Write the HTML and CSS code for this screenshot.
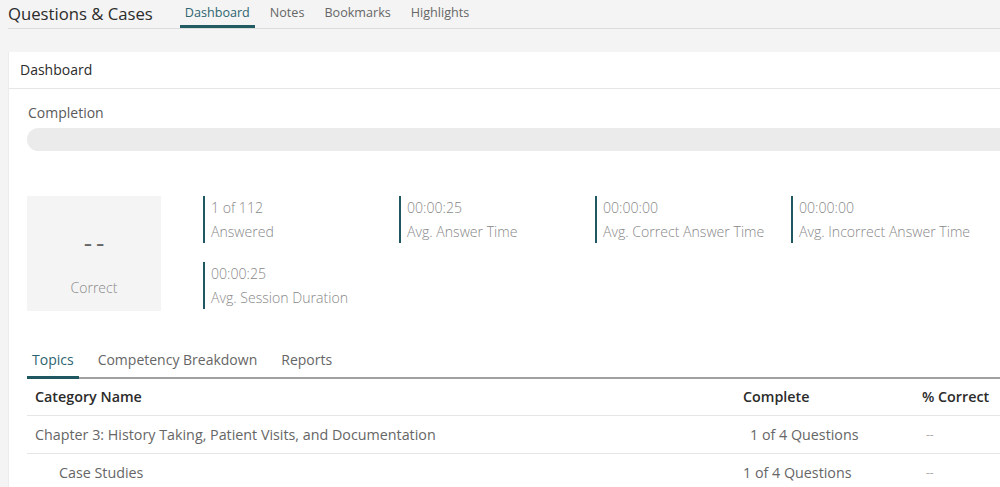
FILE: index.html
```html
<!DOCTYPE html>
<html lang="en">

<head>
    <meta charset="UTF-8">
    <meta name="viewport" content="width=device-width, initial-scale=1.0">
    <title>Questions &amp; Cases</title>
    <link rel="stylesheet" href="styles.css">
</head>

<body>
    <div class="wrapper">
        <header class="topbar">
            <h1 class="app-title">Questions &amp; Cases</h1>
            <nav class="main-nav">
                <a href="#" class="active">Dashboard</a>
                <a href="#">Notes</a>
                <a href="#">Bookmarks</a>
                <a href="#">Highlights</a>
            </nav>
        </header>

        <section class="card">
            <div class="card-title">Dashboard</div>
            <div class="card-body">
                <div class="completion-label">Completion</div>
                <div class="progress"></div>

                <div class="stats">
                    <div class="correct-box">
                        <div class="correct-value">--</div>
                        <div class="correct-label">Correct</div>
                    </div>
                    <div class="stat-grid">
                        <div class="stat">
                            <div>1 of 112</div>
                            <div>Answered</div>
                        </div>
                        <div class="stat">
                            <div>00:00:25</div>
                            <div>Avg. Answer Time</div>
                        </div>
                        <div class="stat">
                            <div>00:00:00</div>
                            <div>Avg. Correct Answer Time</div>
                        </div>
                        <div class="stat">
                            <div>00:00:00</div>
                            <div>Avg. Incorrect Answer Time</div>
                        </div>
                        <div class="stat">
                            <div>00:00:25</div>
                            <div>Avg. Session Duration</div>
                        </div>
                    </div>
                </div>

                <div class="tabs">
                    <a href="#" class="active">Topics</a>
                    <a href="#">Competency Breakdown</a>
                    <a href="#">Reports</a>
                </div>

                <table class="topics-table">
                    <colgroup>
                        <col class="col-name">
                        <col class="col-complete">
                        <col>
                    </colgroup>
                    <thead>
                        <tr>
                            <th>Category Name</th>
                            <th>Complete</th>
                            <th>% Correct</th>
                        </tr>
                    </thead>
                    <tbody>
                        <tr>
                            <td>Chapter 3: History Taking, Patient Visits, and Documentation</td>
                            <td class="indent-sm">1 of 4 Questions</td>
                            <td class="dash">--</td>
                        </tr>
                        <tr>
                            <td class="sub">Case Studies</td>
                            <td>1 of 4 Questions</td>
                            <td class="dash">--</td>
                        </tr>
                    </tbody>
                </table>
            </div>
        </section>
    </div>
</body>

</html>
```

FILE: styles.css
```css
html {
    overflow: hidden;
}

body {
    font-family: "Open Sans", Arial, sans-serif;
    margin: 0;
    background-color: #f4f4f4;
    color: #333;
}

.wrapper {
    width: 1120px;
    padding: 0 0 0 8px;
}

/* top bar */
.topbar {
    display: flex;
    align-items: flex-end;
    height: 28px;
    border-bottom: 1px solid #dcdcdc;
}

.app-title {
    font-size: 16.7px;
    font-weight: 400;
    margin: 0 27px 0 0;
    line-height: 30px;
    align-self: center;
    color: #2b2b2b;
}

.main-nav {
    display: flex;
    gap: 10px;
}

.main-nav a {
    font-size: 12.6px;
    color: #666;
    text-decoration: none;
    padding: 0 5px;
    line-height: 25px;
    border-bottom: 3px solid transparent;
}

.main-nav a.active {
    color: #2d6470;
    border-bottom-color: #235b63;
}

/* card */
.card {
    background-color: white;
    margin-top: 23px;
    border-left: 1px solid #ececec;
}

.card-title {
    font-size: 14px;
    line-height: 36px;
    padding: 0 11px;
    border-bottom: 1px solid #e6e6e6;
    color: #2b2b2b;
}

.card-body {
    padding: 14px 19px 0 18px;
}

.completion-label {
    font-size: 14px;
    line-height: 20px;
    color: #5a5a5a;
    padding-left: 1px;
}

.progress {
    height: 23px;
    margin-top: 5px;
    border-radius: 12px;
    background-color: #ebebeb;
}

/* stats */
.stats {
    display: flex;
    margin-top: 45px;
    gap: 42px;
}

.correct-box {
    width: 134px;
    height: 115px;
    background-color: #f4f4f4;
    display: flex;
    flex-direction: column;
    align-items: center;
    box-sizing: border-box;
    padding-top: 31px;
}

.correct-value {
    font-size: 26px;
    line-height: 30px;
    color: #666;
    letter-spacing: 4px;
    margin-right: -4px;
}

.correct-label {
    font-size: 14px;
    line-height: 20px;
    margin-top: 21px;
    color: #8a8a8a;
    font-weight: 300;
}

.stat-grid {
    display: grid;
    grid-template-columns: repeat(4, 196px);
    row-gap: 19px;
    align-content: start;
}

.stat {
    border-left: 2px solid #1f5860;
    padding-left: 6px;
    font-size: 14.1px;
    font-weight: 300;
    line-height: 23.5px;
    color: #888;
}

/* tabs */
.tabs {
    display: flex;
    gap: 9px;
    margin-top: 31px;
    border-bottom: 2px solid #a0a0a0;
}

.tabs a {
    font-size: 14px;
    line-height: 20px;
    padding: 8px 5px 6px;
    margin-bottom: -2px;
    color: #666;
    text-decoration: none;
    border-bottom: 3px solid transparent;
}

.tabs a + a {
    margin-left: 5px;
}

.tabs a.active {
    color: #2d6470;
    border-bottom-color: #1f5860;
}

/* table */
.topics-table {
    width: 100%;
    border-collapse: collapse;
    table-layout: fixed;
    font-size: 14.3px;
}

.col-name {
    width: 708px;
}

.col-complete {
    width: 179px;
}

.topics-table th {
    text-align: left;
    font-weight: 600;
    color: #2b2b2b;
    line-height: 20px;
    padding: 8px 8px 8px;
    border-bottom: 1px solid #e6e6e6;
}

.topics-table td {
    color: #666;
    line-height: 20px;
    padding: 9px 8px 8px;
    border-bottom: 1px solid #e6e6e6;
}

.topics-table td.indent-sm {
    padding-left: 15px;
}

.topics-table td.sub {
    padding-left: 32px;
}

.topics-table td.dash {
    color: #aaa;
    font-size: 12px;
    padding-left: 12px;
}
```
